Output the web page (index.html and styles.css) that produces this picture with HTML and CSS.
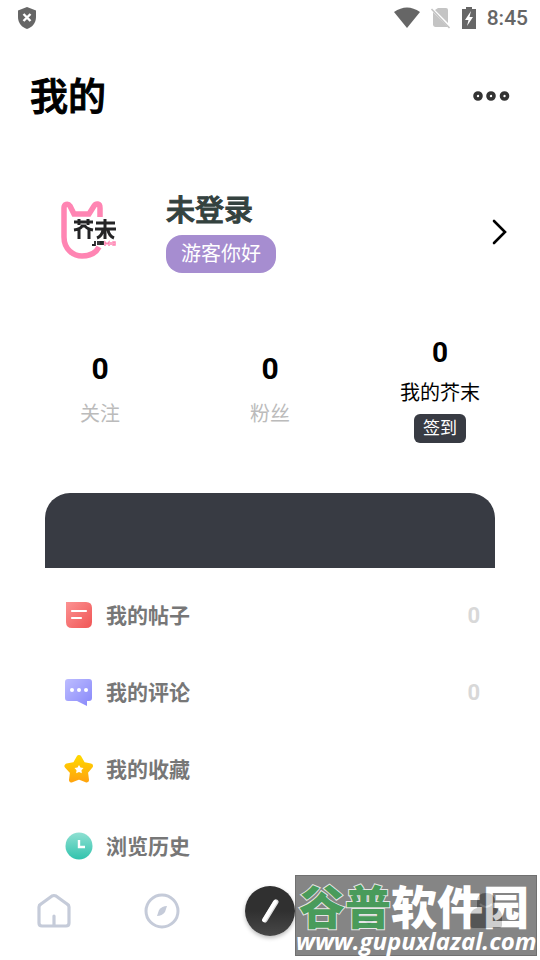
FILE: index.html
```html
<!DOCTYPE html>
<html lang="zh-CN">
<head>
<meta charset="utf-8">
<meta name="viewport" content="width=device-width, initial-scale=1">
<title>我的</title>
<link rel="stylesheet" href="styles.css">
</head>
<body>
<div class="status">
  <svg class="shield" width="20" height="24" viewBox="0 0 20 24"><path d="M10 1 19 4.500V11C19 17 15 21.500 10 23 5 21.500 1 17 1 11V4.500Z" fill="#666"/><path d="m6.500 8 7 7m0-7-7 7" stroke="#fff" stroke-width="2.400"/></svg>
  <div class="status-right">
    <svg width="26" height="22" viewBox="0 0 26 22"><path d="M0 5Q13-4 26 5L13 21Z" fill="#666"/></svg>
    <svg width="20" height="22" viewBox="0 0 20 22"><path d="M7 1H15Q17 1 17 3V16L4 3ZM2 5 17 20H4.500Q2.500 20 2 18V5Z" fill="#c4c4c4"/><path d="M.5 2 18.500 21" stroke="#c4c4c4" stroke-width="1.600"/></svg>
    <svg width="14" height="22" viewBox="0 0 14 22"><path d="M4 0h6v2h4v20H0V2h4Z" fill="#666"/><path d="M9 4 3 13h3.500L5 19l6-9H7.500Z" fill="#fff"/></svg>
    <span class="time">8:45</span>
  </div>
</div>
<header class="header">
  <h1>我的</h1>
  <button class="more" aria-label="更多"><svg width="38" height="12" viewBox="0 0 38 12" fill="none" stroke="#333" stroke-width="3.600"><circle cx="6" cy="5" r="3"/><circle cx="19" cy="5" r="3"/><circle cx="32.500" cy="5" r="3"/></svg></button>
</header>
<main>
  <a class="profile" href="#login">
    <svg class="avatar" width="60" height="60" viewBox="0 1 60 60">
      <path d="M40 16V7C40 2 36 2 34 5L29 13H14L10 5C8 2 4 3 4 7V36C4 48 13 55 22 55C31 55 36 52 39 46" fill="none" stroke="#ff85b3" stroke-width="5.500"/>
      <g fill="none" stroke="#242426" stroke-width="3"><path d="M14 21H33M19 18V24M28 18V24M14 29Q21 28 22 25H25Q27 28 33 29M19 29V38M29 29V38"/><path d="M36 22H55M35 28H56M45 18V38M43 29Q42 35 37 37M48 29Q49 35 54 37"/></g>
      <path d="M35 40V44H32M38 40V44M40 44V41H43V44M40 43H43" fill="none" stroke="#242426" stroke-width="1.800"/>
      <path d="M45 45V41L47 43 49 41V45M51 41V44M53 41H55V44H53Z" fill="none" stroke="#ff85b3" stroke-width="1.500"/>
    </svg>
    <span class="who"><strong>未登录</strong><span class="greeting">游客你好</span></span>
    <svg class="chevron" width="16" height="26" viewBox="0 0 16 26"><path d="m2 2 11 11L2 24" fill="none" stroke="#000" stroke-width="2.600" stroke-linecap="round"/></svg>
  </a>
  <section class="stats">
    <div class="stat"><b>0</b><span>关注</span></div>
    <div class="stat"><b>0</b><span>粉丝</span></div>
    <div class="stat points"><b>0</b><span>我的芥末</span><button>签到</button></div>
  </section>
  <div class="banner"></div>
  <div class="list">
    <a href="#posts">
      <svg width="30" height="30" viewBox="0 0 30 30"><defs><linearGradient id="red" x2="1" y2="1"><stop stop-color="#fc9292"/><stop offset="1" stop-color="#f05555"/></linearGradient></defs><path d="M2 1H22Q28 1 28 7V21Q28 27 22 27H8Q2 27 2 21Z" fill="url(#red)"/><path d="M8 10H22M8 17H17" stroke="#fff" stroke-width="2.200" stroke-linecap="round"/></svg>
      <span>我的帖子</span><b>0</b></a>
    <a href="#comments">
      <svg width="30" height="30" viewBox="0 1 30 30"><defs><linearGradient id="blue" x2="1" y2="1"><stop stop-color="#bdbdff"/><stop offset="1" stop-color="#8787fa"/></linearGradient></defs><path d="M4 2H25Q28 2 28 5V21Q28 24 25 24H23V29L13 24H4Q1 24 1 21V5Q1 2 4 2Z" fill="url(#blue)"/><g fill="#fff"><circle cx="8" cy="13" r="2"/><circle cx="15" cy="13" r="2"/><circle cx="22" cy="13" r="2"/></g></svg>
      <span>我的评论</span><b>0</b></a>
    <a href="#favorites">
      <svg width="30" height="30" viewBox="0 1 30 30"><defs><linearGradient id="gold" x2="0" y2="1"><stop stop-color="#ffd500"/><stop offset="1" stop-color="#ffa60d"/></linearGradient></defs><path d="M15 3.500 19 10.500 26.500 12 21.500 18 22.500 26 15 23 7.500 26 8.500 18 3 12 11 10.500Z" fill="url(#gold)" stroke="url(#gold)" stroke-width="5" stroke-linejoin="round"/><path d="m15 11 1.500 2.500 3 .5-2 2.300.3 3-2.800-1.200-2.800 1.200.3-3-2-2.300 3-.5Z" fill="#fff"/></svg>
      <span>我的收藏</span></a>
    <a href="#history">
      <svg width="30" height="30" viewBox="0 1 30 30"><defs><linearGradient id="teal" x2="0" y2="1"><stop stop-color="#8fe0d2"/><stop offset="1" stop-color="#31c3ad"/></linearGradient></defs><circle cx="15" cy="15" r="13.500" fill="url(#teal)"/><path d="M15 9V16H21" fill="none" stroke="#fff" stroke-width="2.400"/></svg>
      <span>浏览历史</span></a>
  </div>
</main>
<nav class="nav">
  <a href="#home" aria-label="首页"><svg width="36" height="36" viewBox="0 0 36 36" fill="none" stroke="#c5cbd9" stroke-width="3.200" stroke-linecap="round" stroke-linejoin="round"><path d="M3 14Q3 12 5 11L16 3Q18 2 20 3L31 11Q33 12 33 14V30Q33 33 30 33H6Q3 33 3 30Z"/><path d="M18 23V32"/></svg></a>
  <a href="#discover" aria-label="发现"><svg width="36" height="36" viewBox="0 0 36 36"><circle cx="18" cy="18" r="16" fill="none" stroke="#c5cbd9" stroke-width="3"/><path d="M23 13 21 19Q18 23 13 23L15 17Q18 13 23 13Z" fill="#c5cbd9"/></svg></a>
  <button class="write" aria-label="发布"><svg width="50" height="50" viewBox="0 0 50 50"><path d="M31 16 20 34" stroke="#ddd" stroke-width="5" stroke-linecap="round"/><path d="M30 16 19 34" stroke="#fff" stroke-width="4" stroke-linecap="round"/></svg></button>
  <a href="#messages" aria-label="消息"><svg width="36" height="36" viewBox="0 0 36 36"><path d="M4 27H14L9 32Z" fill="#c5cbd9"/></svg></a>
  <a href="#me" aria-label="我的"><svg width="36" height="36" viewBox="0 0 36 36" fill="#333"><path d="M9 9Q9 0 18 0T27 9V15Q34 17 34 24V32Q34 35 31 35H5Q2 35 2 32V24Q2 17 9 15Z"/><path d="M12 11Q18 17 24 11" fill="none" stroke="#aaa" stroke-width="2"/></svg></a>
</nav>
<div class="watermark"><div class="mark-name"><em>谷普</em>软件园</div><div class="mark-url">www.gupuxlazal.com</div></div>
</body>
</html>
```
FILE: styles.css
```css
* { box-sizing: border-box; }
body {
  margin: 0;
  min-height: 100vh;
  display: flex;
  flex-direction: column;
  position: relative;
  background: #fff;
  color: #000;
  font-family: Roboto, "Noto Sans CJK SC", sans-serif;
}
svg { display: block; flex: none; overflow: visible; }
a { color: inherit; text-decoration: none; }
button { border: 0; padding: 0; background: none; font: inherit; }
.status {
  height: 36px;
  padding: 0 12px 0 17px;
  display: flex;
  align-items: center;
  justify-content: space-between;
}
.status-right { display: flex; align-items: center; gap: 11px; }
.time { font-size: 21px; line-height: 24px; font-weight: 500; color: #666; }
.header {
  height: 122px;
  padding: 0 30px;
  display: flex;
  align-items: center;
  justify-content: space-between;
}
h1 { margin: 0; font-size: 38px; line-height: 48px; font-weight: 500; -webkit-text-stroke: 1px; }
main { flex: 1; }
.profile {
  height: 148px;
  padding: 0 32px 0 60px;
  display: flex;
  align-items: center;
}
.who {
  flex: 1;
  margin: 2px 0 0 46px;
  display: flex;
  flex-direction: column;
  align-items: flex-start;
  gap: 6px;
}
.who strong { font-size: 29px; line-height: 36px; font-weight: 500; color: #34423f; -webkit-text-stroke: 1px; }
.greeting {
  padding: 0 15px;
  border-radius: 16px;
  background: #a68dd0;
  color: #fff;
  font-size: 20px;
  line-height: 38px;
}
.stats {
  margin: 31px 15px 50px;
  display: grid;
  grid-template-columns: repeat(3, 1fr);
  align-items: center;
}
.stat { padding-top: 8px; display: flex; flex-direction: column; align-items: center; }
.stat b { font-size: 30px; line-height: 40px; }
.stat span { font-size: 20px; line-height: 50px; color: #bbb; }
.points { padding-top: 0; }
.points b { font-size: 28px; line-height: 32px; }
.points span { line-height: 48px; color: #000; }
.points button {
  margin-top: -3px;
  padding: 0 9px;
  border-radius: 6px;
  background: #383b43;
  color: #fff;
  font-size: 17px;
  line-height: 29px;
}
.banner { height: 75px; margin: 0 45px; border-radius: 25px 25px 0 0; background: #383b43; }
.list { padding: 21px 60px 0 64px; display: flex; flex-direction: column; gap: 24px; }
.list a { height: 53px; display: flex; align-items: center; gap: 12px; }
.list span { flex: 1; font-size: 21px; line-height: 28px; font-weight: 700; color: #777; }
.list b { font-size: 22px; color: #d8d8d8; }
.nav {
  height: 86px;
  padding-bottom: 13px;
  display: grid;
  grid-template-columns: repeat(5, 1fr);
  place-items: center;
}
.write {
  border-radius: 50%;
  background: linear-gradient(#303030 50%, #484848);
  box-shadow: 0 2px 4px #0004;
}
.watermark {
  position: absolute;
  right: 3px;
  bottom: 4px;
  width: 242px;
  height: 81px;
  border: 1px solid #444;
  background: #606060;
  color: #fff;
  opacity: .76;
  white-space: nowrap;
}
.mark-name { padding: 2px 0 0 3px; font: 900 46px/52px "Noto Sans CJK SC", sans-serif; }
.mark-name em { font-style: normal; color: #117d29; -webkit-text-stroke: 2px #ddd; paint-order: stroke fill; }
.mark-url { font: italic 700 24px/22px "Open Sans", sans-serif; }
```
